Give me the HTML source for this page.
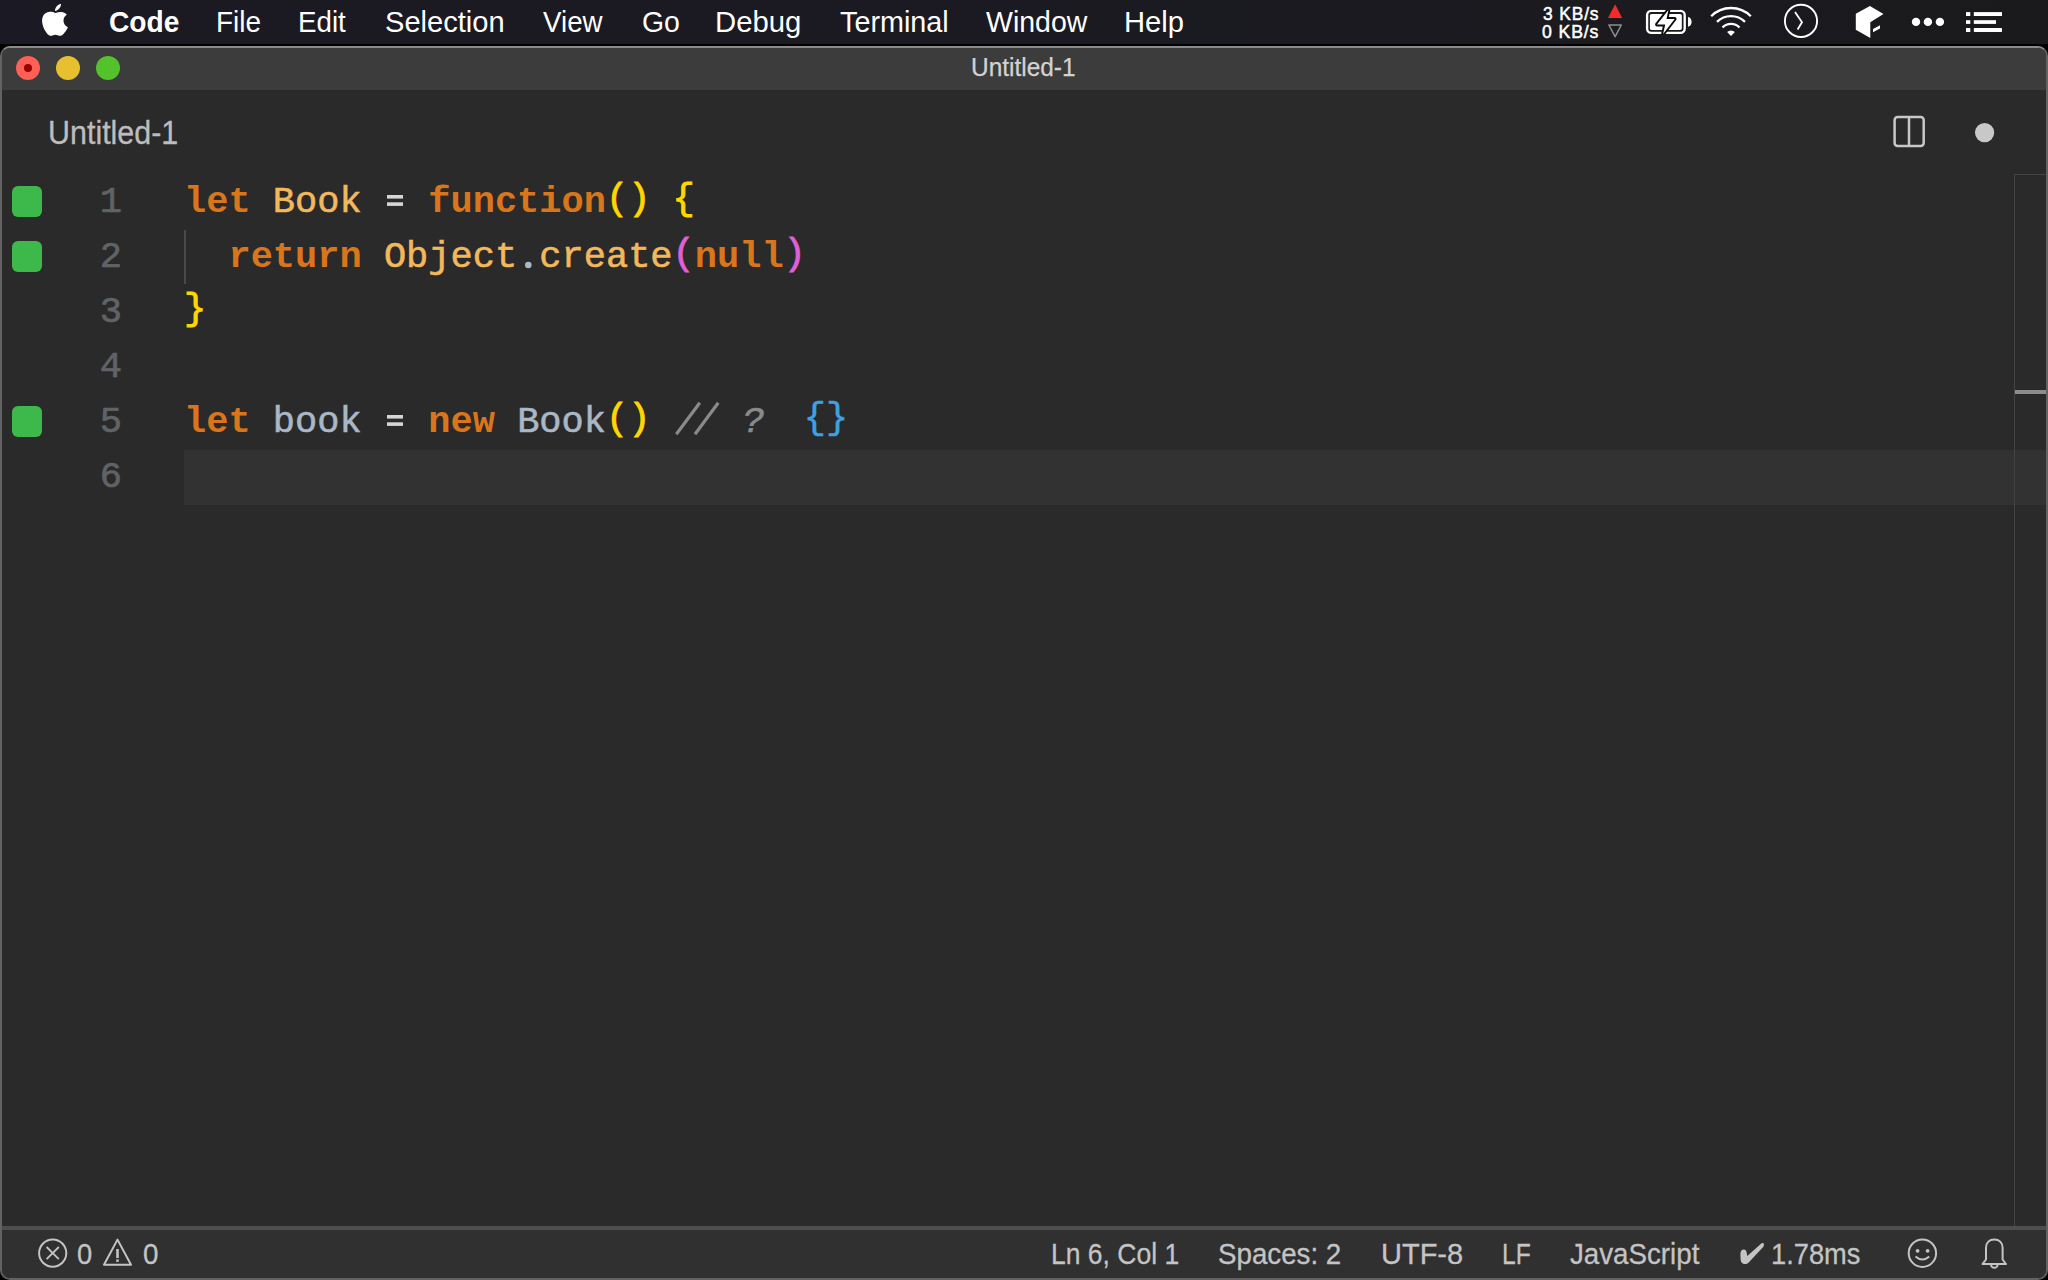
<!DOCTYPE html>
<html>
<head>
<meta charset="utf-8">
<style>
html,body{margin:0;padding:0;width:2048px;height:1280px;overflow:hidden;background:#000;}
body{position:relative;font-family:"Liberation Sans",sans-serif;}
.a{position:absolute;}
.t{position:absolute;white-space:pre;transform-origin:0 0;}
svg{position:absolute;overflow:visible;}
#menubar{position:absolute;left:0;top:0;width:2048px;height:44px;background:linear-gradient(90deg,#1b1a24 0%,#1b1a22 50%,#1a1a1d 100%);}
#win{position:absolute;left:0;top:46px;width:2048px;height:1234px;box-sizing:border-box;background:#2a2a2a;border:2px solid #626262;border-top-color:#8a8a8a;border-radius:10px;overflow:hidden;}
#inner{position:absolute;left:-2px;top:-48px;width:2048px;height:1280px;}
.code{position:absolute;left:184px;font-family:"Liberation Mono",monospace;font-size:37px;line-height:55px;white-space:pre;color:#a9b7c6;}
.ln{position:absolute;left:70px;width:52px;text-align:right;font-family:"Liberation Mono",monospace;font-size:37px;line-height:55px;color:#606366;-webkit-text-stroke:0.7px #606366;}
.gm{position:absolute;left:12px;width:30px;height:30.5px;border-radius:6px;background:#3cb94a;}
.k{color:#d9761c;font-weight:bold;}
.c{color:#f2b85c;-webkit-text-stroke:0.6px #f2b85c;}
.rg{-webkit-text-stroke:0.6px #a9b7c6;}
.y{color:#ffd700;-webkit-text-stroke:0.9px #ffd700;position:relative;top:-3px;}
.m{color:#e060d8;-webkit-text-stroke:0.9px #e060d8;position:relative;top:-3px;}
.cm{color:#8a8a8a;font-style:italic;-webkit-text-stroke:0.7px #8a8a8a;position:relative;left:3px;}
.bl{color:#3ea2e0;-webkit-text-stroke:0.5px #3ea2e0;position:relative;top:-3.5px;left:-2px;}
.op{color:#d6d6d6;}
</style>
</head>
<body>
<div id="menubar"></div>
<svg style="left:0;top:0" width="2048" height="44" viewBox="0 0 2048 44">
  <!-- apple -->
  <g transform="translate(36,0)" fill="#fff">
    <path d="M19.4 13.1 C17.5 12.2 15.5 11.7 13 11.9 C8.5 12.3 6 16 6.1 21 C6.2 26.5 9.5 32 12 34.5 C13.5 36 15.5 36 17 35.2 C18.5 34.5 20.3 34.5 21.8 35.2 C23.5 36 25.5 36 27 34.5 C29 32.5 31 29.5 31.9 27.3 C29 26 27.5 23.5 27.5 20.5 C27.5 17.8 29 15.8 30.8 14.7 C29.2 12.6 27 11.8 25 11.9 C23 12 21.2 12.3 19.4 13.1 Z"/>
    <path d="M19 11 C18.8 8 21.5 4.5 25 3.8 C25.2 7 22.5 10.5 19 11 Z"/>
  </g>
  <!-- net triangles -->
  <polygon points="1615.1,4.3 1622.2,18 1608,18" fill="#f42a2a"/>
  <polygon points="1608.9,25 1621.3,25 1615.1,36.6" fill="none" stroke="#8e8e8e" stroke-width="1.5" stroke-linejoin="round"/>
  <!-- battery -->
  <rect x="1647.1" y="10.9" width="37.6" height="22" rx="4.2" fill="none" stroke="#fff" stroke-width="2.35"/>
  <rect x="1649.9" y="13.9" width="31.9" height="16" rx="1.6" fill="#fff"/>
  <path d="M1688 16.9 C1690.5 17.3 1691.6 19.5 1691.6 21.85 C1691.6 24.2 1690.5 26.4 1688 26.8 Z" fill="#fff"/>
  <polygon points="1668.4,10 1666.5,18.9 1674.7,18.9 1663.1,33.9 1665.2,24.5 1657,24.5" fill="#0b0b0e" stroke="#0b0b0e" stroke-width="3.8" stroke-linejoin="round"/>
  <rect x="1650" y="4" width="30" height="5.8" fill="#1a1a1f"/>
  <rect x="1650" y="34.1" width="30" height="6" fill="#1a1a1f"/>
  <polygon points="1668.4,10 1666.5,18.9 1674.7,18.9 1663.1,33.9 1665.2,24.5 1657,24.5" fill="#fff"/>
  <!-- wifi -->
  <g fill="none" stroke="#fff" stroke-width="2.3" stroke-linecap="butt">
    <path d="M1711.2 16.2 A28 28 0 0 1 1750.8 16.2"/>
    <path d="M1717 21.9 A19.8 19.8 0 0 1 1745 21.9"/>
    <path d="M1722.5 27.5 A12 12 0 0 1 1739.5 27.5"/>
  </g>
  <path d="M1731 36 L1727.1 32.1 A5.5 5.5 0 0 1 1734.9 32.1 Z" fill="#fff"/>
  <!-- circle chevron -->
  <circle cx="1801" cy="20.9" r="16.1" fill="none" stroke="#fff" stroke-width="1.9"/>
  <polyline points="1795,12 1802,22.2 1797.6,29.5" fill="none" stroke="#fff" stroke-width="1.8"/>
  <!-- cube -->
  <polygon points="1869.9,5.9 1883.5,14.1 1870.3,22.3 1870.3,37.9 1855.8,29.7 1855.8,13.7" fill="#fff"/>
  <polygon points="1873,28.9 1880,25.2 1880,28.6 1873,32.2" fill="#fff"/>
  <!-- dots -->
  <circle cx="1916" cy="21.9" r="4.2" fill="#fff"/>
  <circle cx="1927.9" cy="21.9" r="4.2" fill="#fff"/>
  <circle cx="1939.9" cy="21.9" r="4.2" fill="#fff"/>
  <!-- list -->
  <g fill="#fff">
    <rect x="1966" y="12.1" width="4.3" height="3.9"/>
    <rect x="1966" y="20.2" width="4.3" height="3.7"/>
    <rect x="1966" y="28" width="4.3" height="4"/>
    <rect x="1973.8" y="12.1" width="28.2" height="3.9"/>
    <rect x="1973.8" y="20.2" width="22.2" height="3.7"/>
    <rect x="1973.8" y="28" width="28.2" height="4" rx="0.8"/>
  </g>
</svg>

<div class="t" id="m_code" style="left:108.66px;top:6.60px;font-size:30px;line-height:30px;color:#ffffff;font-weight:700;transform:scaleX(0.9381);">Code</div>
<div class="t" id="m_file" style="left:216.33px;top:6.60px;font-size:30px;line-height:30px;color:#ffffff;transform:scaleX(0.9306);">File</div>
<div class="t" id="m_edit" style="left:298.15px;top:6.60px;font-size:30px;line-height:30px;color:#ffffff;transform:scaleX(0.9241);">Edit</div>
<div class="t" id="m_sel" style="left:384.83px;top:6.60px;font-size:30px;line-height:30px;color:#ffffff;transform:scaleX(0.9686);">Selection</div>
<div class="t" id="m_view" style="left:543.02px;top:6.60px;font-size:30px;line-height:30px;color:#ffffff;transform:scaleX(0.9233);">View</div>
<div class="t" id="m_go" style="left:642.05px;top:6.60px;font-size:30px;line-height:30px;color:#ffffff;transform:scaleX(0.9474);">Go</div>
<div class="t" id="m_debug" style="left:715.45px;top:6.60px;font-size:30px;line-height:30px;color:#ffffff;transform:scaleX(0.9766);">Debug</div>
<div class="t" id="m_term" style="left:839.60px;top:6.60px;font-size:30px;line-height:30px;color:#ffffff;transform:scaleX(0.9590);">Terminal</div>
<div class="t" id="m_win" style="left:985.60px;top:6.60px;font-size:30px;line-height:30px;color:#ffffff;transform:scaleX(0.9496);">Window</div>
<div class="t" id="m_help" style="left:1123.64px;top:6.60px;font-size:30px;line-height:30px;color:#ffffff;transform:scaleX(0.9730);">Help</div>
<div class="t" id="kb1" style="left:1543.18px;top:4.66px;font-size:18px;line-height:18px;color:#ffffff;transform:scaleX(0.9655);-webkit-text-stroke:0.5px #fff;letter-spacing:0.9px;">3 KB/s</div>
<div class="t" id="kb2" style="left:1542.28px;top:22.66px;font-size:18px;line-height:18px;color:#ffffff;transform:scaleX(0.9811);-webkit-text-stroke:0.5px #fff;letter-spacing:0.9px;">0 KB/s</div>
<div id="win"><div id="inner">
  <!-- title bar -->
  <div class="a" style="left:0;top:48px;width:2048px;height:42px;background:#3c3c3c"></div>
  <div class="a" style="left:16px;top:56px;width:24px;height:24px;border-radius:50%;background:#fe5f57"></div>
  <div class="a" style="left:24px;top:64px;width:8px;height:8px;border-radius:50%;background:#9a0000"></div>
  <div class="a" style="left:56px;top:56px;width:24px;height:24px;border-radius:50%;background:#e6c02e"></div>
  <div class="a" style="left:96px;top:56px;width:24px;height:24px;border-radius:50%;background:#54c32b"></div>

  <!-- editor actions -->
  <svg style="left:0;top:0" width="2048" height="200" viewBox="0 0 2048 200">
    <rect x="1894.6" y="117" width="29.1" height="29" rx="3" fill="none" stroke="#c8c8c8" stroke-width="2.5"/>
    <line x1="1909" y1="117" x2="1909" y2="146" stroke="#c8c8c8" stroke-width="2.5"/>
    <circle cx="1984.6" cy="132.6" r="9.6" fill="#c8c8c8"/>
  </svg>

  <!-- editor -->
  <div class="a" style="left:184px;top:450px;width:1864px;height:55px;background:#323232"></div>
  <div class="a" style="left:184px;top:230px;width:2px;height:54px;background:#4a4a4a"></div>
  <div class="a" style="left:2014px;top:174px;width:1px;height:1052px;background:#444"></div>
  <div class="a" style="left:2014px;top:174px;width:34px;height:1px;background:#444"></div>
  <div class="a" style="left:2015px;top:390px;width:33px;height:4px;background:#8c8c8c"></div>

  <div class="gm" style="top:186px"></div>
  <div class="gm" style="top:241px"></div>
  <div class="gm" style="top:406px"></div>

  <div class="ln" style="top:174.7px">1</div>
  <div class="ln" style="top:229.7px">2</div>
  <div class="ln" style="top:284.7px">3</div>
  <div class="ln" style="top:339.7px">4</div>
  <div class="ln" style="top:394.7px">5</div>
  <div class="ln" style="top:449.7px">6</div>

  <div class="code" style="top:174.7px"><span class="k">let</span> <span class="c">Book</span>   <span class="k">function</span><span class="y">()</span> <span class="y">{</span></div>
  <div class="code" style="top:229.7px">  <span class="k">return</span> <span class="c">Object</span> <span class="c">create</span><span class="m">(</span><span class="k">null</span><span class="m">)</span></div>
  <div class="code" style="top:284.7px"><span class="y">}</span></div>
  <div class="code" style="top:394.7px"><span class="k">let</span> <span class="rg">book</span>   <span class="k">new</span> <span class="rg">Book</span><span class="y">()</span>    <span class="cm">?</span>  <span class="bl">{}</span></div>

  <svg style="left:0;top:0" width="2048" height="500" viewBox="0 0 2048 500">
    <circle cx="528.3" cy="265" r="3.3" fill="#a9b7c6"/>
    <rect x="387" y="195" width="16" height="3.6" fill="#d6d6d6"/>
    <rect x="387" y="202.3" width="16" height="3.6" fill="#d6d6d6"/>
    <rect x="387" y="415" width="16" height="3.6" fill="#d6d6d6"/>
    <rect x="387" y="422.3" width="16" height="3.6" fill="#d6d6d6"/>
    <line x1="676.3" y1="434.3" x2="699.8" y2="402.8" stroke="#8a8a8a" stroke-width="3.2"/>
    <line x1="695" y1="434.3" x2="718.3" y2="402.8" stroke="#8a8a8a" stroke-width="3.2"/>
  </svg>
  <!-- status bar -->
  <div class="a" style="left:0;top:1226px;width:2048px;height:4px;background:#4e4e4e"></div>
  <div class="a" style="left:0;top:1230px;width:2048px;height:50px;background:#303030"></div>
  <svg style="left:0;top:1200px" width="2048" height="80" viewBox="0 1200 2048 80">
    <g fill="none" stroke="#c4c4c4" stroke-width="2">
      <circle cx="52.7" cy="1253.1" r="13.6"/>
      <line x1="46.6" y1="1247" x2="58.8" y2="1259.2" stroke-width="1.8"/>
      <line x1="58.8" y1="1247" x2="46.6" y2="1259.2" stroke-width="1.8"/>
      <polygon points="117.5,1239.6 131,1264.8 104,1264.8" stroke-linejoin="round"/>
      <circle cx="1922.4" cy="1253.2" r="13.7"/>
      <path d="M1915.5 1256.5 Q1922.4 1262.5 1929.3 1256.5"/>
      <path d="M1982.5 1264 L1986 1259.5 L1986 1248 C1986 1242.5 1989.5 1239.5 1994.3 1239.5 C1999.1 1239.5 2002.6 1242.5 2002.6 1248 L2002.6 1259.5 L2006 1264 Z" stroke-linejoin="round"/>
      <path d="M1991 1264.5 A3.3 3.3 0 0 0 1997.6 1264.5"/>
    </g>
    <rect x="116.2" y="1249" width="2.6" height="9" fill="#c4c4c4"/>
    <rect x="116.2" y="1259.4" width="2.6" height="2.4" fill="#c4c4c4"/>
    <circle cx="1917.6" cy="1250.8" r="1.9" fill="#c4c4c4"/>
    <circle cx="1927.6" cy="1250.8" r="1.9" fill="#c4c4c4"/>
    <path d="M1747.3 1255.9 L1761.6 1243.3 C1762.8 1242.4 1764.2 1243.2 1763.9 1244.8 L1763.6 1246.6 L1748.7 1262.4 C1747.2 1264 1745 1264.6 1743.2 1263.7 C1741.5 1262.8 1740.7 1261.2 1740.6 1259.2 L1740.4 1253.6 C1740.4 1250.9 1742 1249.4 1743.8 1249.4 C1745.4 1249.4 1746.4 1250.6 1746.6 1252.3 Z" fill="#c4c4c4"/>
  </svg>
<div class="t" id="title" style="left:971.02px;top:54.83px;font-size:25px;line-height:25px;color:#d2d2d2;transform:scaleX(0.9772);-webkit-text-stroke:0.25px #d2d2d2;">Untitled-1</div>
<div class="t" id="tab" style="left:48.33px;top:116.54px;font-size:32.5px;line-height:32.5px;color:#bdbdbd;transform:scaleX(0.9368);-webkit-text-stroke:0.3px #bdbdbd;">Untitled-1</div>
<div class="t" id="s_e" style="left:77.35px;top:1239.32px;font-size:29.5px;line-height:29.5px;color:#c4c4c4;transform:scaleX(0.9269);-webkit-text-stroke:0.3px #c4c4c4;">0</div>
<div class="t" id="s_w" style="left:143.29px;top:1239.32px;font-size:29.5px;line-height:29.5px;color:#c4c4c4;transform:scaleX(0.9417);-webkit-text-stroke:0.3px #c4c4c4;">0</div>
<div class="t" id="s_ln" style="left:1050.80px;top:1239.32px;font-size:29.5px;line-height:29.5px;color:#c4c4c4;transform:scaleX(0.8987);-webkit-text-stroke:0.3px #c4c4c4;">Ln 6, Col 1</div>
<div class="t" id="s_sp" style="left:1218.26px;top:1239.32px;font-size:29.5px;line-height:29.5px;color:#c4c4c4;transform:scaleX(0.9396);-webkit-text-stroke:0.3px #c4c4c4;">Spaces: 2</div>
<div class="t" id="s_utf" style="left:1380.82px;top:1239.32px;font-size:29.5px;line-height:29.5px;color:#c4c4c4;transform:scaleX(0.9830);-webkit-text-stroke:0.3px #c4c4c4;">UTF-8</div>
<div class="t" id="s_lf" style="left:1502.28px;top:1239.32px;font-size:29.5px;line-height:29.5px;color:#c4c4c4;transform:scaleX(0.8335);-webkit-text-stroke:0.3px #c4c4c4;">LF</div>
<div class="t" id="s_js" style="left:1570.40px;top:1239.32px;font-size:29.5px;line-height:29.5px;color:#c4c4c4;transform:scaleX(0.9392);-webkit-text-stroke:0.3px #c4c4c4;">JavaScript</div>
<div class="t" id="s_ms" style="left:1771.14px;top:1239.32px;font-size:29.5px;line-height:29.5px;color:#c4c4c4;transform:scaleX(0.9237);-webkit-text-stroke:0.3px #c4c4c4;">1.78ms</div>
</div></div>
</body>
</html>
